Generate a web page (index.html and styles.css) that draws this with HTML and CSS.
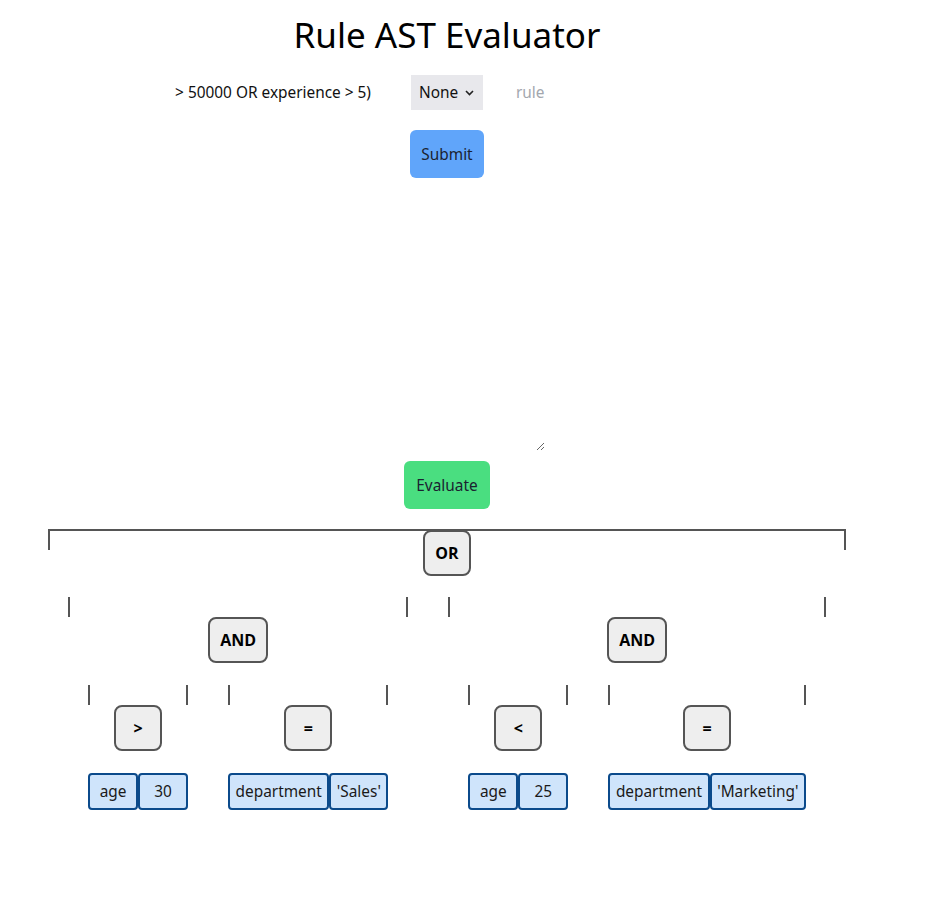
FILE: index.html
```html
<!DOCTYPE html>
<html lang="en">
<head>
<meta charset="utf-8">
<title>Rule AST Evaluator</title>
<link rel="stylesheet" href="styles.css">
</head>
<body>
<div class="app">
  <h1 class="title">Rule AST Evaluator</h1>
  <form class="rule-form">
    <div class="rule-row">
      <input class="field field-rule" type="text" value="&gt; 50000 OR experience &gt; 5)">
      <select class="picker">
        <option>None</option>
      </select>
      <input class="field field-name" type="text" placeholder="rule">
    </div>
    <button class="btn btn-submit" type="button">Submit</button>
    <textarea class="data-input"></textarea>
    <button class="btn btn-evaluate" type="button">Evaluate</button>
  </form>

  <div class="tree">
    <div class="subtree root">
      <div class="node">OR</div>
      <div class="children">
        <div class="subtree">
          <div class="node">AND</div>
          <div class="children">
            <div class="subtree">
              <div class="node">&gt;</div>
              <div class="leaves">
                <span class="leaf">age</span><span class="leaf">30</span>
              </div>
            </div>
            <div class="subtree">
              <div class="node">=</div>
              <div class="leaves">
                <span class="leaf">department</span><span class="leaf">'Sales'</span>
              </div>
            </div>
          </div>
        </div>
        <div class="subtree">
          <div class="node">AND</div>
          <div class="children">
            <div class="subtree">
              <div class="node">&lt;</div>
              <div class="leaves">
                <span class="leaf">age</span><span class="leaf">25</span>
              </div>
            </div>
            <div class="subtree">
              <div class="node">=</div>
              <div class="leaves">
                <span class="leaf">department</span><span class="leaf">'Marketing'</span>
              </div>
            </div>
          </div>
        </div>
      </div>
    </div>
  </div>
</div>
</body>
</html>
```

FILE: styles.css
```css
* {
  box-sizing: border-box;
}

html, body {
  margin: 0;
  padding: 0;
  background: #ffffff;
}

body {
  font-family: "Noto Sans", "Open Sans", sans-serif;
  font-size: 15px;
  color: #111111;
}

.app {
  width: 894px;
  display: flex;
  flex-direction: column;
  align-items: center;
  padding-top: 12px;
}

.title {
  margin: 0;
  font-size: 35px;
  font-weight: 400;
  line-height: 46px;
  color: #000000;
}

.rule-form {
  display: flex;
  flex-direction: column;
  align-items: center;
  margin-top: 17px;
}

.rule-row {
  display: flex;
  align-items: center;
}

.field {
  font-family: inherit;
  font-size: 15.4px;
  height: 35px;
  padding: 0 10px;
  border: none;
  outline: none;
  background: transparent;
  color: #111111;
}

.field::placeholder {
  color: #a3a7ae;
}

.field-rule {
  width: 216px;
  text-align: right;
  margin-right: 30px;
}

.field-name {
  width: 223px;
  margin-left: 23px;
}

.picker {
  -webkit-appearance: none;
  appearance: none;
  font-family: inherit;
  font-size: 15.4px;
  width: 72px;
  height: 35px;
  border: none;
  border-radius: 0;
  background-color: #e8e8ec;
  background-image: url("data:image/svg+xml,%3Csvg xmlns='http://www.w3.org/2000/svg' width='9' height='6' viewBox='0 0 9 6'%3E%3Cpath d='M1 1l3.5 3.5L8 1' fill='none' stroke='%23222' stroke-width='1.6'/%3E%3C/svg%3E");
  background-repeat: no-repeat;
  background-position: right 9px center;
  color: #111111;
  padding: 0 4px 0 8px;
}

.btn {
  font-family: inherit;
  font-size: 15.4px;
  border: none;
  border-radius: 6px;
  height: 48px;
  color: #1b2230;
  cursor: pointer;
}

.btn-submit {
  margin-top: 20px;
  width: 74px;
  background: #60a5fa;
}

.data-input {
  margin-top: 10px;
  width: 196px;
  height: 263px;
  border: none;
  outline: none;
  font-family: inherit;
  font-size: 15px;
}

.btn-evaluate {
  margin-top: 10px;
  width: 86px;
  background: #4ade80;
}

.tree {
  margin-top: 20px;
  display: flex;
  justify-content: center;
}

.subtree {
  display: flex;
  flex-direction: column;
  align-items: center;
  margin: 0 20px;
}

.subtree::before {
  content: "";
  align-self: stretch;
  height: 20px;
  border-left: 2px solid #555555;
  border-right: 2px solid #555555;
}

.root {
  margin: 0;
}

.root::before {
  height: 19px;
  border-top: 2px solid #555555;
}

.node {
  min-width: 48px;
  padding: 10px;
  border: 2px solid #555555;
  border-radius: 8px;
  background: #eeeeee;
  font-family: "Open Sans", "Noto Sans", sans-serif;
  font-weight: 700;
  font-size: 16px;
  line-height: 22px;
  text-align: center;
  color: #000000;
  margin-bottom: 22px;
}

.root > .node {
  margin-top: -20px;
  margin-bottom: 21px;
}

.children {
  display: flex;
  align-items: flex-start;
}

.leaves {
  display: flex;
}

.leaf {
  min-width: 50px;
  padding: 6px 5.5px;
  border: 2px solid #0b4a8b;
  border-radius: 4px;
  background: #cfe4fb;
  font-size: 15.4px;
  line-height: 21px;
  text-align: center;
  color: #1a1a1a;
}
```
